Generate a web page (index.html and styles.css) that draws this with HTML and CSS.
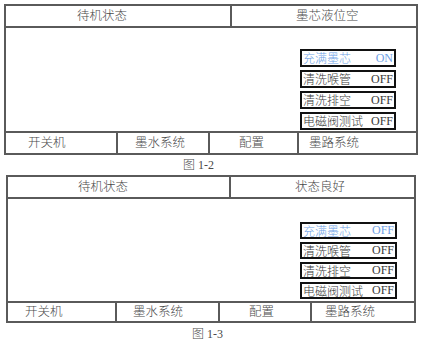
FILE: index.html
```html
<!DOCTYPE html>
<html>
<head>
  <meta charset="utf-8">
  <title>墨路系统</title>
  <link rel="stylesheet" href="styles.css">
</head>
<body>
  <!-- 图 1-2 -->
  <div class="screen screen-a">
    <div class="head">
      <div class="cell head-left">待机状态</div>
      <div class="cell head-right">墨芯液位空</div>
    </div>
    <div class="main">
      <div class="panel">
        <div class="btn active"><span>充满墨芯</span><span class="val">ON</span></div>
        <div class="btn"><span>清洗喉管</span><span class="val">OFF</span></div>
        <div class="btn"><span>清洗排空</span><span class="val">OFF</span></div>
        <div class="btn"><span>电磁阀测试</span><span class="val">OFF</span></div>
      </div>
    </div>
    <div class="foot">
      <div class="cell">开关机</div>
      <div class="cell">墨水系统</div>
      <div class="cell">配置</div>
      <div class="cell">墨路系统</div>
    </div>
  </div>
  <p class="caption caption-a">图 1-2</p>

  <!-- 图 1-3 -->
  <div class="screen screen-b">
    <div class="head">
      <div class="cell head-left">待机状态</div>
      <div class="cell head-right">状态良好</div>
    </div>
    <div class="main">
      <div class="panel">
        <div class="btn active"><span>充满墨芯</span><span class="val">OFF</span></div>
        <div class="btn"><span>清洗喉管</span><span class="val">OFF</span></div>
        <div class="btn"><span>清洗排空</span><span class="val">OFF</span></div>
        <div class="btn"><span>电磁阀测试</span><span class="val">OFF</span></div>
      </div>
    </div>
    <div class="foot">
      <div class="cell">开关机</div>
      <div class="cell">墨水系统</div>
      <div class="cell">配置</div>
      <div class="cell">墨路系统</div>
    </div>
  </div>
  <p class="caption caption-b">图 1-3</p>
</body>
</html>
```

FILE: styles.css
```css
/* Pagina: wit, serif-lettertype zoals in de handleiding */
body {
  margin: 0;
  padding-top: 4px;
  background: #fff;
  color: #4a4a4a;
  font-family: "Liberation Serif", "Noto Sans CJK SC", serif;
  font-size: 12px;
  font-weight: 300;
}

/* Scherm-kader */
.screen {
  box-sizing: border-box;
  border: 2px solid #5a5a5a;
}

.screen-a {
  margin-left: 4px;
  width: 414px;
}

.screen-b {
  margin-left: 6px;
  width: 410px;
}

.cell {
  line-height: 20px;
  white-space: nowrap;
}

/* Kopregel */
.head {
  display: grid;
  height: 20px;
  border-bottom: 2px solid #5a5a5a;
  font-size: 12.5px;
}

.screen-a .head { grid-template-columns: 224px 1fr; }
.screen-b .head { grid-template-columns: 221px 1fr; }

.head-left { padding-left: 71px; }
.head-right {
  border-left: 2px solid #5a5a5a;
  padding-left: 64px;
}
.screen-b .head-left { padding-left: 70px; }

/* Middenvlak met knoppen */
.main {
  display: flex;
  justify-content: flex-end;
}

.screen-a .main {
  height: 103px;
  padding-right: 20px;
}

.screen-b .main {
  height: 102px;
  padding-right: 17px;
}

.panel {
  display: flex;
  flex-direction: column;
  gap: 3px;
  width: 96px;
}

.screen-a .panel { padding-top: 21px; }
.screen-b .panel { padding-top: 23px; width: 97px; }

.btn {
  box-sizing: border-box;
  display: flex;
  justify-content: space-between;
  align-items: center;
  height: 18px;
  padding: 0 1px 0 1px;
  border: 2px solid #111;
  color: #3a3a3a;
  font-size: 12px;
}

.screen-b .btn { height: 17px; }

.btn.active { color: #6f9fe6; }

.val {
  font-size: 12px;
  font-weight: 400;
}

/* Voetregel */
.foot {
  display: grid;
  height: 20px;
  border-top: 2px solid #5a5a5a;
  font-size: 12.5px;
}

.screen-a .foot { grid-template-columns: 110px 92px 89px 1fr; }
.screen-b .foot { grid-template-columns: 107px 103px 92px 1fr; height: 18px; }

.foot .cell + .cell { border-left: 2px solid #5a5a5a; }

.screen-b .foot .cell { line-height: 18px; }

.screen-a .foot .cell:nth-child(1) { padding-left: 22px; }
.screen-a .foot .cell:nth-child(2) { padding-left: 17px; }
.screen-a .foot .cell:nth-child(3) { padding-left: 29px; }
.screen-a .foot .cell:nth-child(4) { padding-left: 10px; }

.screen-b .foot .cell:nth-child(1) { padding-left: 17px; }
.screen-b .foot .cell:nth-child(2) { padding-left: 16px; }
.screen-b .foot .cell:nth-child(3) { padding-left: 29px; }
.screen-b .foot .cell:nth-child(4) { padding-left: 13px; }

/* Onderschrift */
.caption {
  margin: 0;
  font-size: 12px;
}

.caption-a {
  height: 20px;
  line-height: 20px;
  padding-left: 183px;
}

.caption-b {
  height: 22px;
  line-height: 22px;
  padding-left: 192px;
}
```
